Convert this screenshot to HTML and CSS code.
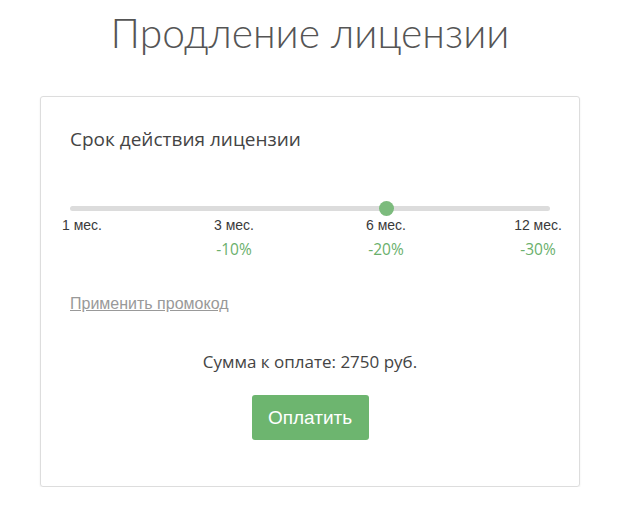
FILE: index.html
```html
<!DOCTYPE html>
<html lang="ru">
<head>
<meta charset="utf-8">
<link rel="stylesheet" href="styles.css">
</head>
<body>
<div class="page">
<h1 class="title">Продление лицензии</h1>
<div class="card">
  <div class="label">Срок действия лицензии</div>
  <div class="slider">
    <div class="track"></div>
    <div class="thumb"></div>
  </div>
  <div class="ticks">
    <div class="tick"><span class="term">1 мес.</span></div>
    <div class="tick"><span class="term">3 мес.</span><span class="disc">-10%</span></div>
    <div class="tick"><span class="term">6 мес.</span><span class="disc">-20%</span></div>
    <div class="tick"><span class="term">12 мес.</span><span class="disc">-30%</span></div>
  </div>
  <a class="promo" href="#">Применить промокод</a>
  <div class="sum">Сумма к оплате: 2750 руб.</div>
  <div class="actions"><button class="pay">Оплатить</button></div>
</div>
</div>
</body>
</html>
```
FILE: styles.css
```css
html, body {
  margin: 0;
  padding: 0;
  background: #fff;
}
body {
  font-family: "Open Sans", Lato, sans-serif;
  color: #444;
}
.page {
  width: 620px;
}
.title {
  margin: 0;
  padding-top: 8px;
  height: 88px;
  box-sizing: border-box;
  text-align: center;
  font-family: Lato, "Open Sans", sans-serif;
  font-weight: 300;
  font-size: 40.8px;
  line-height: 50px;
  color: #555;
}
.card {
  margin: 8px 0 0 40px;
  width: 540px;
  height: 391px;
  box-sizing: border-box;
  border: 1px solid #ddd;
  border-radius: 3px;
  box-shadow: 0 1px 2px rgba(0,0,0,0.08);
  padding: 27px 29px;
}
.label {
  font-size: 19px;
  line-height: 30px;
  color: #444;
}
.slider {
  position: relative;
  margin-top: 47px;
  height: 15px;
  display: flex;
  align-items: center;
}
.track {
  flex: 1;
  height: 5px;
  border-radius: 3px;
  background: #dcdcdc;
}
.thumb {
  position: absolute;
  left: 309px;
  top: 0;
  width: 15px;
  height: 15px;
  border-radius: 50%;
  background: #7cbb7d;
}
.ticks {
  display: flex;
  justify-content: space-between;
  padding: 0 12px;
  margin-top: 0;
  height: 50px;
}
.tick {
  width: 0;
  display: flex;
  flex-direction: column;
  align-items: center;
}
.term {
  white-space: nowrap;
  font-family: "Liberation Sans", Arial, sans-serif;
  font-size: 14px;
  line-height: 18px;
  color: #3a3a3a;
}
.disc {
  white-space: nowrap;
  margin-top: 6px;
  font-size: 15.5px;
  line-height: 18px;
  color: #6ab06c;
}
.promo {
  display: block;
  width: max-content;
  margin-top: 29px;
  font-family: "Liberation Sans", Arial, sans-serif;
  font-size: 16px;
  line-height: 18px;
  color: #999;
  text-decoration: underline;
}
.sum {
  margin-top: 39px;
  text-align: center;
  font-size: 17px;
  line-height: 20px;
  color: #444;
}
.actions {
  margin-top: 23px;
  display: flex;
  justify-content: center;
}
.pay {
  width: 117px;
  height: 45px;
  border: none;
  border-radius: 3px;
  background: #6db56f;
  color: #fff;
  font-family: "Liberation Sans", Arial, sans-serif;
  font-size: 19px;
  cursor: pointer;
}
```
